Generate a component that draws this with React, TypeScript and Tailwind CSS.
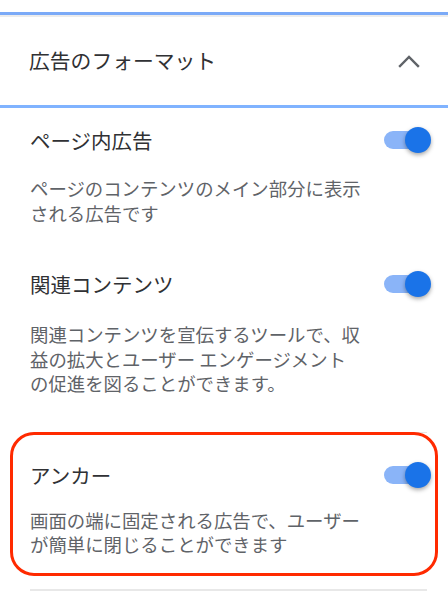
import React from "react";

const font = { fontFamily: '"Noto Sans CJK JP", "Noto Sans", sans-serif' };

function Toggle() {
  return (
    <div className="relative w-[47px] h-[26px] shrink-0">
      <div className="absolute left-0 top-[4px] w-[44px] h-[18px] rounded-full bg-[#8ab4f8]" />
      <div className="absolute right-0 top-0 w-[26px] h-[26px] rounded-full bg-[#1a73e8] shadow-[0_2px_4px_rgba(0,0,0,0.35)]" />
    </div>
  );
}

function TitleRow({ title }: { title: string }) {
  return (
    <div className="flex items-center justify-between pl-[30px] pr-[17px] h-[28px]">
      <span className="text-[20.5px] leading-[28px] text-[#303134]">{title}</span>
      <Toggle />
    </div>
  );
}

function Desc({ lines, className }: { lines: string[]; className?: string }) {
  return (
    <div className={"pl-[30px] text-[18.4px] leading-[24.5px] text-[#5f6368] " + (className ?? "")}>
      {lines.map((l, i) => (
        <div key={i} className="whitespace-nowrap">
          {l}
        </div>
      ))}
    </div>
  );
}

export default function App() {
  return (
    <div className="w-[448px] h-[600px] bg-white overflow-hidden" style={font}>
      <div className="h-[12px]" />
      <div className="h-[3px] bg-[#7baaf7]" />
      <div className="h-[2px] bg-[#ececec]" />
      <div className="h-[88px] flex items-center justify-between pl-[29px] pr-[27px]">
        <span className="text-[20.8px] text-[#303134]">広告のフォーマット</span>
        <svg width="24" height="14" viewBox="0 0 24 14" fill="none">
          <polyline
            points="3,12 12,3 21,12"
            stroke="#5f6368"
            strokeWidth="2.4"
            strokeLinecap="square"
          />
        </svg>
      </div>
      <div className="h-[3px] bg-[#80b3ff]" />

      <div className="pt-[18px]">
        <TitleRow title="ページ内広告" />
        <Desc
          className="mt-[22px]"
          lines={["ページのコンテンツのメイン部分に表示", "される広告です"]}
        />
      </div>

      <div className="mt-[45px]">
        <TitleRow title="関連コンテンツ" />
        <Desc
          className="mt-[24px]"
          lines={[
            "関連コンテンツを宣伝するツールで、収",
            "益の拡大とユーザー エンゲージメント",
            "の促進を図ることができます。",
          ]}
        />
      </div>

      <div className="relative mt-[36px]">
        <div className="ml-[30px] mr-[21px] h-[1px] bg-[#e6e6e6]" />
        <div className="pt-[28px]">
          <TitleRow title="アンカー" />
          <Desc
            className="mt-[19px]"
            lines={["画面の端に固定される広告で、ユーザー", "が簡単に閉じることができます"]}
          />
        </div>
        <div className="mt-[32px] ml-[30px] mr-[21px] h-[2px] bg-[#e8e8e8]" />
        <div className="absolute left-[10px] top-0 w-[428px] h-[144px] rounded-[24px] border-[3px] border-[#ff2a00]" />
      </div>
    </div>
  );
}
